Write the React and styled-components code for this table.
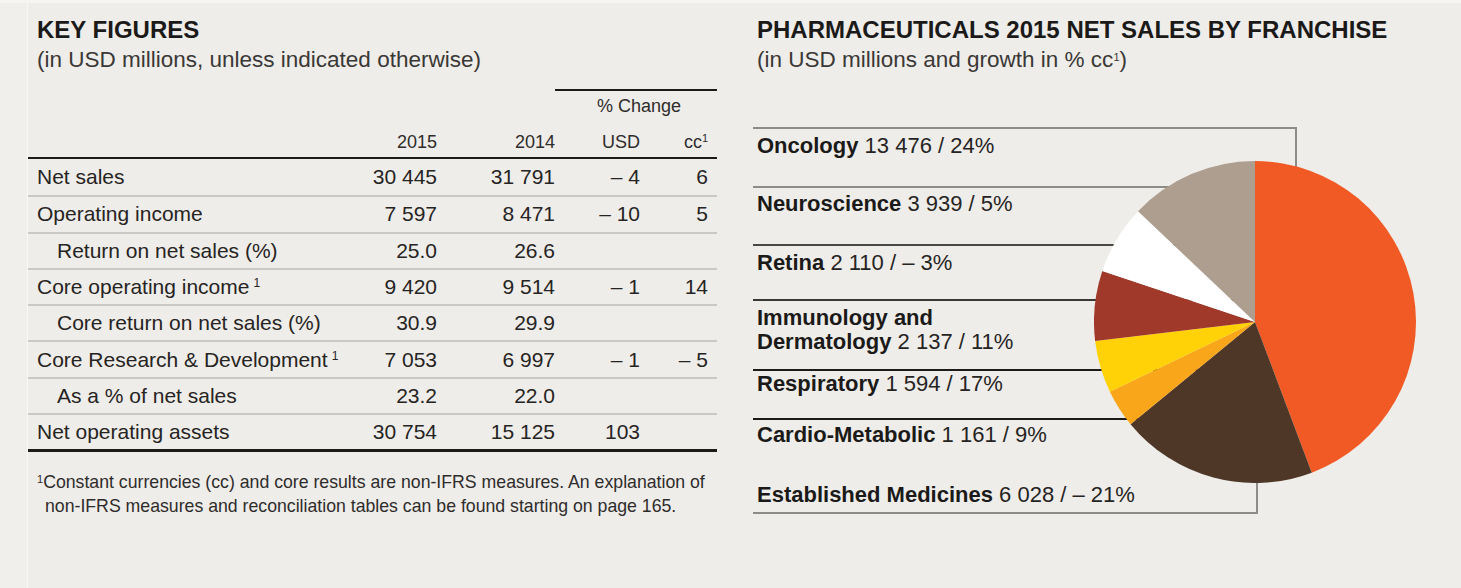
import React from 'react';
import styled, { createGlobalStyle } from 'styled-components';

const GlobalStyle = createGlobalStyle`
  html, body {
    margin: 0;
    padding: 0;
    background: #efede9;
  }
  body {
    font-family: "Liberation Sans", Arial, sans-serif;
    color: #262423;
  }
`;

const Page = styled.div`
  display: flex;
  width: 1461px;
  height: 588px;
  box-sizing: border-box;
  border-top: 3px solid #f6f5f3;
  background: #efede9;
  overflow: hidden;
`;

const Gutter = styled.div`
  flex: none;
  width: 27px;
  background: #f0efec;
  border-right: 1px solid #f8f7f5;
`;

const Panel = styled.section`
  flex: none;
  width: ${(p) => p.$width}px;
  margin-left: ${(p) => p.$offset || 0}px;
  padding-top: 12px;
`;

const Title = styled.h2`
  margin: 0;
  padding-left: ${(p) => p.$indent}px;
  font-size: 24px;
  line-height: 30px;
  font-weight: 700;
  color: #1b1a19;
`;

const Subtitle = styled.p`
  margin: 2px 0 0;
  padding-left: ${(p) => p.$indent}px;
  font-size: 22.5px;
  line-height: 26px;
  color: #3a3836;
  white-space: nowrap;
`;

const Sup = styled.sup`
  font-size: ${(p) => p.$size || 12}px;
  line-height: 0;
  vertical-align: ${(p) => p.$raise || 7}px;
  margin-left: ${(p) => p.$gap || 0}px;
`;

/* ---------- key figures table ---------- */

const Table = styled.div`
  margin-top: 16px;
  border-bottom: 3px solid #1c1b1a;
`;

const Grid = styled.div`
  display: grid;
  grid-template-columns: minmax(0, 1fr) 90px 118px 85px 77px;
  align-items: center;
`;

const GroupHead = styled(Grid)`
  height: 32px;
`;

const ChangeCell = styled.div`
  grid-column: 4 / 6;
  height: 32px;
  box-sizing: border-box;
  border-top: 2px solid #1c1b1a;
  padding-left: 6px;
  text-align: center;
  font-size: 18px;
  line-height: 30px;
  color: #2e2c2b;
`;

const YearHead = styled(Grid)`
  height: 38px;
  box-sizing: border-box;
  padding-top: 6px;
  border-bottom: 2px solid #1c1b1a;
  font-size: 18px;
  line-height: 30px;
  color: #2e2c2b;
`;

const Row = styled(Grid)`
  height: 36.3px;
  box-sizing: border-box;
  font-size: 21px;
  color: #262423;

  & + & {
    border-top: 2px solid #cbc9c5;
  }
`;

const Label = styled.div`
  padding-left: ${(p) => (p.$sub ? 29 : 9)}px;
  white-space: nowrap;
`;

const Num = styled.div`
  text-align: right;
  white-space: nowrap;
  padding-right: ${(p) => (p.$last ? 9 : 0)}px;
`;

const Footnote = styled.p`
  margin: 18px 0 0;
  padding-left: 17px;
  text-indent: -8px;
  font-size: 17.7px;
  line-height: 24px;
  color: #2e2c2b;
  white-space: nowrap;
`;

/* ---------- franchise chart ---------- */

const Chart = styled.div`
  position: relative;
  margin-top: 54px;
`;

const Item = styled.div`
  width: ${(p) => p.$width}px;
  height: ${(p) => p.$height}px;
  box-sizing: border-box;
  padding: ${(p) => p.$pad}px 0 0 4px;
  border-top: ${(p) => (p.$line ? `2px solid ${p.$line}` : 'none')};
  border-right: ${(p) => (p.$side ? `2px solid ${p.$side}` : 'none')};
  border-bottom: ${(p) => (p.$under ? `2px solid ${p.$under}` : 'none')};
  font-size: 22px;
  line-height: 24px;
  color: #262423;
`;

const Name = styled.b`
  font-weight: 700;
  color: #1b1a19;
`;

const PieBox = styled.svg`
  position: absolute;
  left: 341px;
  top: 34px;
  display: block;
`;

const rows = [
  { label: 'Net sales', v15: '30 445', v14: '31 791', usd: '– 4', cc: '6' },
  { label: 'Operating income', v15: '7 597', v14: '8 471', usd: '– 10', cc: '5' },
  { label: 'Return on net sales (%)', sub: true, v15: '25.0', v14: '26.6' },
  { label: 'Core operating income', note: true, v15: '9 420', v14: '9 514', usd: '– 1', cc: '14' },
  { label: 'Core return on net sales (%)', sub: true, v15: '30.9', v14: '29.9' },
  { label: 'Core Research & Development', note: true, v15: '7 053', v14: '6 997', usd: '– 1', cc: '– 5' },
  { label: 'As a % of net sales', sub: true, v15: '23.2', v14: '22.0' },
  { label: 'Net operating assets', v15: '30 754', v14: '15 125', usd: '103' },
];

const franchises = [
  { name: 'Oncology', value: '13 476 / 24%', width: 544, height: 59, pad: 5, line: '#8e8c89', side: '#8e8c89' },
  { name: 'Neuroscience', value: '3 939 / 5%', width: 505, height: 58, pad: 4, line: '#8e8c89' },
  { name: 'Retina', value: '2 110 / – 3%', width: 505, height: 55, pad: 5, line: '#4a4846' },
  { name: 'Immunology and', name2: 'Dermatology', value: '2 137 / 11%', width: 505, height: 70, pad: 5, line: '#3a3836' },
  { name: 'Respiratory', value: '1 594 / 17%', width: 505, height: 49, pad: 1, line: '#1c1b1a' },
  { name: 'Cardio-Metabolic', value: '1 161 / 9%', width: 505, height: 62, pad: 3, line: '#1c1b1a' },
  { name: 'Established Medicines', value: '6 028 / – 21%', width: 505, height: 34, pad: 3, under: '#8e8c89', side: '#8e8c89' },
];

const slices = [
  { value: 13476, color: '#f15a24' },
  { value: 6028, color: '#4f3727' },
  { value: 1161, color: '#f9a61a' },
  { value: 1594, color: '#fed206' },
  { value: 2137, color: '#a0392a' },
  { value: 2110, color: '#ffffff' },
  { value: 3939, color: '#ad9e90' },
];

const Pie = ({ size }) => {
  const r = size / 2;
  const total = slices.reduce((s, d) => s + d.value, 0);
  let start = 0;
  const point = (a) => [r + r * Math.sin(a), r - r * Math.cos(a)];

  return (
    <PieBox width={size} height={size} viewBox={`0 0 ${size} ${size}`}>
      {slices.map((d, i) => {
        const sweep = (d.value / total) * Math.PI * 2;
        const [x0, y0] = point(start);
        const [x1, y1] = point(start + sweep);
        const large = sweep > Math.PI ? 1 : 0;
        start += sweep;
        return (
          <path
            key={i}
            d={`M${r} ${r} L${x0} ${y0} A${r} ${r} 0 ${large} 1 ${x1} ${y1} Z`}
            fill={d.color}
          />
        );
      })}
    </PieBox>
  );
};

const App = () => (
  <>
    <GlobalStyle />
    <Page>
      <Gutter />
      <Panel $width={689}>
        <Title $indent={9}>KEY FIGURES</Title>
        <Subtitle $indent={9}>(in USD millions, unless indicated otherwise)</Subtitle>

        <Table>
          <GroupHead>
            <ChangeCell>% Change</ChangeCell>
          </GroupHead>
          <YearHead>
            <div />
            <Num>2015</Num>
            <Num>2014</Num>
            <Num>USD</Num>
            <Num $last>
              cc<Sup $size={11} $raise={6}>1</Sup>
            </Num>
          </YearHead>
          {rows.map((r) => (
            <Row key={r.label}>
              <Label $sub={r.sub}>
                {r.label}
                {r.note && <Sup $gap={4}>1</Sup>}
              </Label>
              <Num>{r.v15}</Num>
              <Num>{r.v14}</Num>
              <Num>{r.usd}</Num>
              <Num $last>{r.cc}</Num>
            </Row>
          ))}
        </Table>

        <Footnote>
          <Sup $size={11} $raise={5}>1</Sup>Constant currencies (cc) and core results are non-IFRS measures. An explanation of
          <br />
          non-IFRS measures and reconciliation tables can be found starting on page 165.
        </Footnote>
      </Panel>

      <Panel $width={670} $offset={36}>
        <Title $indent={4}>PHARMACEUTICALS 2015 NET SALES BY FRANCHISE</Title>
        <Subtitle $indent={4}>
          (in USD millions and growth in % cc<Sup $size={11} $raise={6}>1</Sup>)
        </Subtitle>

        <Chart>
          {franchises.map((f) => (
            <Item
              key={f.name}
              $width={f.width}
              $height={f.height}
              $pad={f.pad}
              $line={f.line}
              $side={f.side}
              $under={f.under}
            >
              <Name>{f.name}</Name>
              {f.name2 ? (
                <>
                  <br />
                  <Name>{f.name2}</Name> {f.value}
                </>
              ) : (
                <> {f.value}</>
              )}
            </Item>
          ))}
          <Pie size={322} />
        </Chart>
      </Panel>
    </Page>
  </>
);

export default App;
